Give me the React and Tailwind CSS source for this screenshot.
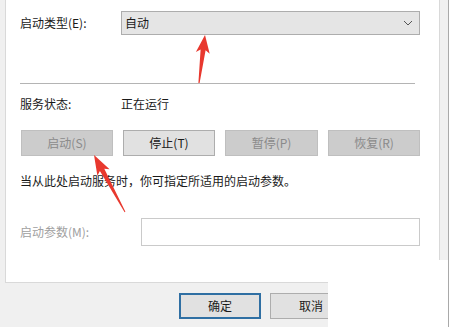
const font = "font-['Microsoft_YaHei','Noto_Sans_CJK_SC',sans-serif]"

function WinButton({ label, disabled, wide }) {
  return (
    <div
      className={`h-[26px] flex items-center justify-center text-[12px] border ${wide} ${
        disabled
          ? 'bg-[#cccccc] border-[#bfbfbf] text-[#8a8a8a]'
          : 'bg-[#e1e1e1] border-[#adadad] text-[#1a1a1a]'
      }`}
    >
      {label}
    </div>
  )
}

function Arrow({ points }) {
  return <polygon points={points} fill="#e8382e" />
}

export default function App() {
  return (
    <div className={`relative w-[450px] h-[327px] overflow-hidden bg-white ${font}`}>
      <div className="w-[449px] h-[327px] bg-[#f0f0f0] border-r border-[#a9a9a9]">

        {/* tab page */}
        <div className="ml-[5px] w-[435px] h-[283px] bg-white border-l border-r border-b border-[#d9d9d9] pt-[11px] pl-[14px] text-[12px] text-[#1a1a1a]">
          <div className="flex items-center h-[24px]">
            <span className="w-[101px] leading-[16px]">启动类型(E):</span>
            <div className="w-[299px] h-[24px] bg-[#e5e5e5] border border-[#adadad] flex items-center justify-between pl-[3px] pr-[6px]">
              <span className="leading-[16px]">自动</span>
              <svg width="10" height="6" viewBox="0 0 10 6">
                <path d="M1 1 L5 5 L9 1" fill="none" stroke="#555" strokeWidth="1" />
              </svg>
            </div>
          </div>

          <div className="mt-[48px] w-[395px] h-px bg-[#b4b4b4]" />

          <div className="mt-[12px] flex leading-[16px]">
            <span className="w-[101px]">服务状态:</span>
            <span>正在运行</span>
          </div>

          <div className="mt-[18px] ml-px flex gap-[10px]">
            <WinButton label="启动(S)" disabled wide="w-[92px]" />
            <WinButton label="停止(T)" wide="w-[92px]" />
            <WinButton label="暂停(P)" disabled wide="w-[93px]" />
            <WinButton label="恢复(R)" disabled wide="w-[92px]" />
          </div>

          <p className="mt-[17px] leading-[16px]">当从此处启动服务时，你可指定所适用的启动参数。</p>

          <div className="mt-[29px] flex items-center">
            <span className="w-[121px] leading-[16px] text-[#a0a0a0]">启动参数(M):</span>
            <div className="w-[279px] h-[28px] bg-white border border-[#cacaca]" />
          </div>
        </div>

        {/* dialog buttons */}
        <div className="mt-[10px] ml-[179px] flex gap-[9px] text-[12px] text-[#1a1a1a]">
          <div className="w-[82px] h-[26px] bg-[#e1e1e1] border-2 border-[#2f6fa3] flex items-center justify-center">确定</div>
          <div className="w-[82px] h-[26px] bg-[#e1e1e1] border border-[#adadad] flex items-center justify-center">取消</div>
        </div>
      </div>

      {/* cropped-away corner */}
      <div className="absolute left-[328px] top-[260px] w-[120px] h-[67px] bg-white" />

      {/* annotation arrows */}
      <svg className="absolute left-0 top-0" width="450" height="327" viewBox="0 0 450 327">
        <Arrow points="205,35 209.7,53.8 205.6,50.2 199.6,83.1 198.4,82.9 200.6,49.6 195.9,52" />
        <Arrow points="94,155 109.6,169.2 104.3,168.7 125.4,211.8 124.6,212.2 99.9,171.1 97.4,175.8" />
      </svg>
    </div>
  )
}
